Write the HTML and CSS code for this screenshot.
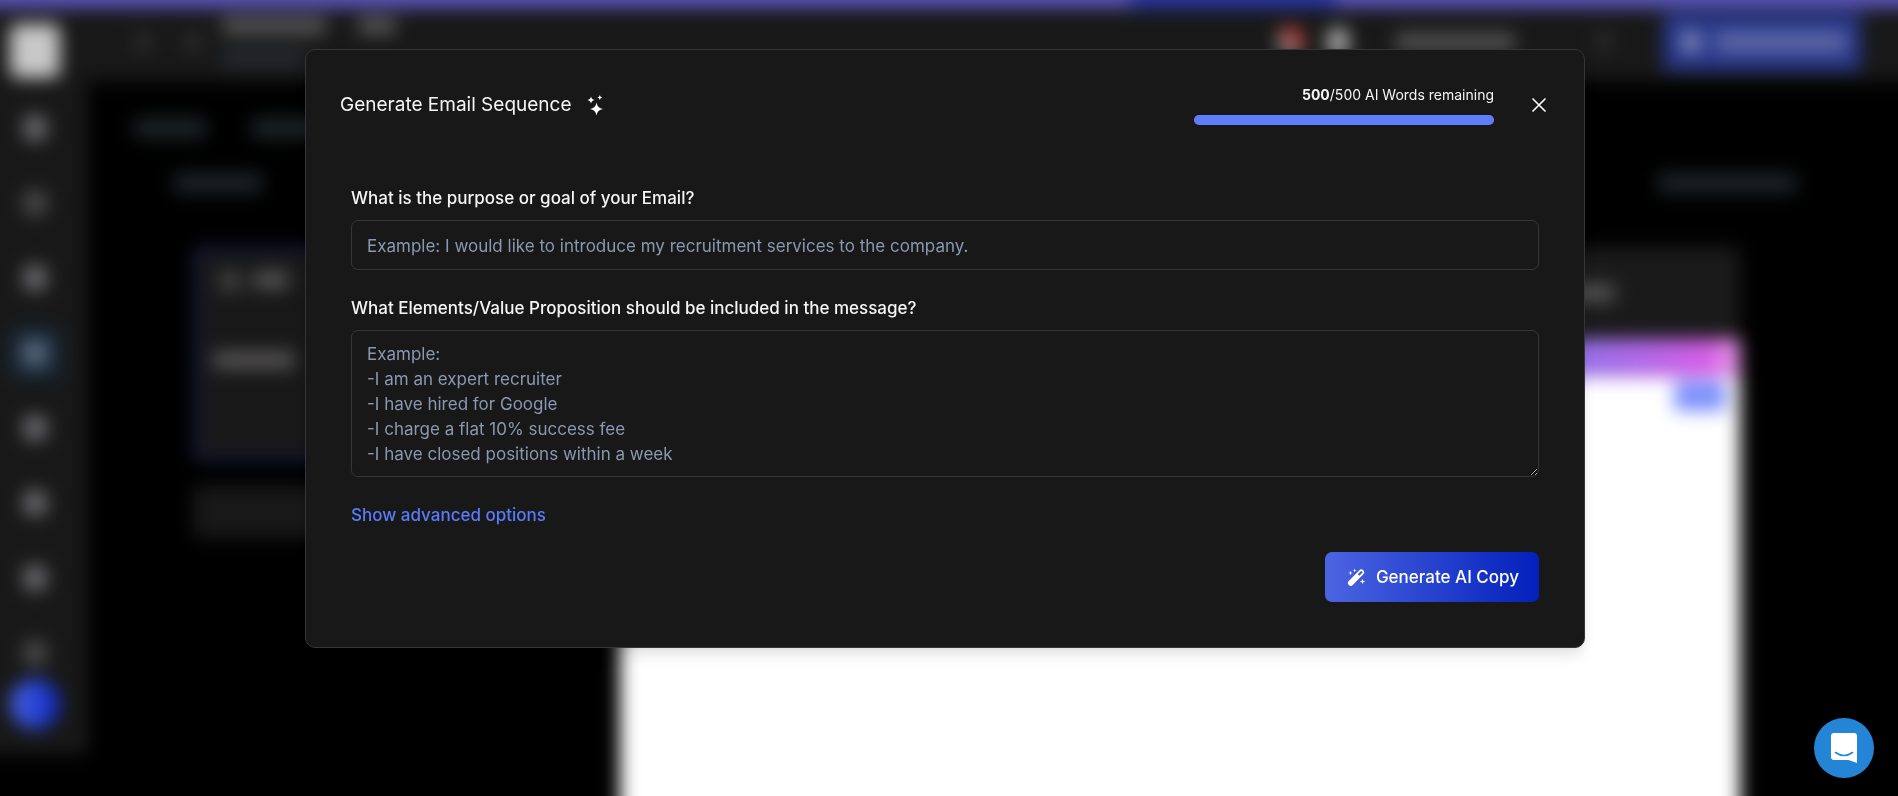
FILE: index.html
```html
<!DOCTYPE html>
<html lang="en">
<head>
<meta charset="utf-8">
<meta name="viewport" content="width=device-width, initial-scale=1">
<title>Generate Email Sequence</title>
<link rel="stylesheet" href="styles.css">
</head>
<body>
<div class="backdrop" aria-hidden="true">
<div class="app">
  <div class="banner"><span class="banner-action"></span></div>
  <div class="shell">
    <nav class="sidebar">
      <span class="logo"></span>
      <span class="nav-item"><i class="nav-icon"></i></span>
      <span class="nav-item"><i class="nav-icon dim"></i></span>
      <span class="nav-item"><i class="nav-icon"></i></span>
      <span class="nav-item active"><i class="nav-icon"></i></span>
      <span class="nav-item"><i class="nav-icon"></i></span>
      <span class="nav-item"><i class="nav-icon"></i></span>
      <span class="nav-item"><i class="nav-icon"></i></span>
      <span class="nav-item"><i class="nav-icon dim"></i></span>
      <span class="avatar"></span>
    </nav>
    <div class="page">
      <header class="topbar">
        <span class="dot"></span>
        <span class="dot"></span>
        <div class="heading">
          <div class="heading-row"><span class="bar title-bar"></span><span class="bar tag-bar"></span></div>
          <span class="bar sub-bar"></span>
        </div>
        <span class="bell"></span>
        <span class="user"></span>
        <span class="bar account-bar"></span>
        <span class="dot caret"></span>
        <div class="cta"><span class="cta-icon"></span><span class="cta-text"></span></div>
      </header>
      <div class="crumbs"><span class="ink crumb"></span><span class="ink crumb"></span></div>
      <div class="tabs"><span class="ink tab"></span><span class="ink tab wide"></span></div>
      <div class="columns">
        <div class="steps">
          <div class="step">
            <div class="step-head"><span class="step-icon"></span><span class="bar step-name"></span></div>
            <span class="bar step-subject"></span>
          </div>
          <div class="add-step"></div>
        </div>
        <div class="editor">
          <div class="editor-head"><span class="bar editor-bar"></span></div>
          <div class="editor-ribbon"></div>
          <div class="editor-body"><span class="chip"></span></div>
        </div>
      </div>
    </div>
  </div>
</div>
</div>

<div class="overlay">
  <section class="modal" role="dialog" aria-modal="true" aria-labelledby="modal-title">
    <header class="modal-head">
      <h1 class="modal-title" id="modal-title">Generate Email Sequence</h1>
      <svg class="sparkle" viewBox="0 0 16 20" aria-hidden="true">
        <path d="M9.500 7.500 Q10.300 13.200 16 14 Q10.300 14.800 9.500 20.500 Q8.700 14.800 3 14 Q8.700 13.200 9.500 7.500Z"/>
        <path d="M4 1.500 Q4.500 4.500 7.500 5 Q4.500 5.500 4 8.500 Q3.500 5.500 0.500 5 Q3.500 4.500 4 1.500Z"/>
        <path d="M12.800 0 Q13.100 2.200 15.300 2.500 Q13.100 2.800 12.800 5 Q12.500 2.800 10.300 2.500 Q12.500 2.200 12.800 0Z"/>
      </svg>
      <div class="quota">
        <span class="quota-text" id="quota-text"><b>500</b>/500 AI Words remaining</span>
        <div class="quota-track" role="progressbar" aria-labelledby="quota-text" aria-valuenow="500" aria-valuemax="500"><div class="quota-fill" style="width:100%"></div></div>
      </div>
      <button class="close" type="button" aria-label="Close">
        <svg class="close-icon" viewBox="0 0 16 16" aria-hidden="true"><path d="M1.500 1.500 14.500 14.500M14.500 1.500 1.500 14.500"/></svg>
      </button>
    </header>
    <form class="modal-body">
      <label class="label" for="goal">What is the purpose or goal of your Email?</label>
      <input class="field" id="goal" type="text" placeholder="Example: I would like to introduce my recruitment services to the company.">
      <label class="label" for="elements">What Elements/Value Proposition should be included in the message?</label>
      <textarea class="field area" id="elements" rows="5" placeholder="Example:
-I am an expert recruiter
-I have hired for Google
-I charge a flat 10% success fee
-I have closed positions within a week"></textarea>
      <button class="advanced" type="button">Show advanced options</button>
      <button class="generate" type="button">
        <svg class="wand" viewBox="0 0 17 17" aria-hidden="true">
          <path fill-rule="evenodd" d="M11.300 1.300a2.700 2.700 0 0 1 4 0a2.700 2.700 0 0 1 0 3.900L4.800 16a2.700 2.700 0 0 1-4 0a2.700 2.700 0 0 1 0-3.900ZM9.800 5.300 11.300 6.800 14.100 4a1 1 0 0 0 0-1.500a1 1 0 0 0-1.500 0Z"/>
          <path d="M2.500 1.800 3.100 3.400 4.700 4 3.100 4.600 2.500 6.200 1.900 4.600 0.300 4 1.900 3.400ZM6.700 -0.300 7.200 1 8.500 1.500 7.200 2 6.700 3.300 6.200 2 4.900 1.500 6.200 1ZM14.500 9.700 15.200 11.800 17.300 12.500 15.200 13.200 14.500 15.300 13.800 13.200 11.700 12.500 13.800 11.800Z"/>
        </svg>
        Generate AI Copy
      </button>
    </form>
  </section>
</div>

<button class="chat" type="button" aria-label="Open chat">
  <svg class="chat-icon" viewBox="0 0 28 32" aria-hidden="true">
    <path fill="#fff" d="M4 1H24a3 3 0 0 1 3 3V31L18.500 28H4a3 3 0 0 1-3-3V4a3 3 0 0 1 3-3Z"/>
    <path fill="none" stroke="#2484d6" stroke-width="1.600" stroke-linecap="round" d="M5.500 20.500Q14 26.500 22.500 20.500"/>
  </svg>
</button>
</body>
</html>
```
FILE: styles.css
```css
* { box-sizing: border-box; }

body {
  margin: 0;
  height: 100vh;
  overflow: hidden;
  background: #000;
  color: #f5f5f6;
  font-family: Inter, "Liberation Sans", sans-serif;
  font-size: 17px;
}

button, input, textarea { font: inherit; }

/* Application behind the dialog; it bleeds 24px past the window so its blur has no soft rim */
.backdrop { position: fixed; inset: 0; overflow: hidden; }
.app {
  display: flex;
  flex-direction: column;
  width: calc(100% + 48px);
  height: calc(100% + 48px);
  margin: -24px;
  filter: blur(9px);
}
.banner { flex: none; height: 32px; background: #5a56ba; display: flex; }
.banner-action { width: 204px; margin-left: 1155px; background: #2836a6; }
.shell { flex: 1; min-height: 0; display: flex; align-items: flex-start; }

.sidebar {
  flex: none;
  width: 112px;
  height: 746px;
  padding: 16px 0 0 34px;
  background: #181818;
}
.sidebar > * { display: flex; align-items: center; justify-content: center; }
.logo { width: 50px; height: 54px; border-radius: 8px; background: #c8c8c8; margin-bottom: 25px; }
.nav-item { width: 50px; height: 50px; margin-bottom: 25px; border-radius: 8px; }
.nav-item.active { background: #182a3c; }
.nav-icon { width: 24px; height: 26px; border-radius: 8px; background: #68686c; }
.nav-icon.dim { background: #48484a; }
.active .nav-icon { background: #5c6a7c; }
.avatar { width: 50px; height: 50px; margin-top: -24px; border-radius: 50%; background: linear-gradient(90deg, #4a63e8, #0a28c0); }

.page { flex: 1; min-width: 0; height: 100%; display: flex; flex-direction: column; }
.topbar { flex: none; display: flex; align-items: center; height: 73px; padding: 0 61px 6px 0; background: #181818; }
.bar { display: block; height: 18px; border-radius: 4px; background: #545253; }
.dot { width: 14px; height: 18px; margin-left: 48px; background: #303030; }
.dot + .dot { margin-left: 36px; }
.heading { margin: 0 auto 0 22px; }
.heading-row { display: flex; gap: 32px; }
.title-bar { width: 104px; }
.tag-bar { width: 38px; }
.sub-bar { width: 82px; margin-top: 14px; background: #25292e; }
.bell { width: 26px; height: 28px; border-radius: 8px; background: linear-gradient(45deg, #777 40%, #c04040 60%); }
.user { width: 22px; height: 28px; margin-left: 24px; border-radius: 8px; background: #a8a8a8; }
.account-bar { width: 120px; margin-left: 46px; }
.caret { margin-left: 82px; }
.cta { display: flex; align-items: center; gap: 14px; width: 198px; height: 58px; margin-left: 52px; padding-left: 18px; border-radius: 6px; background: #263688; }
.cta-icon { width: 20px; height: 22px; background: #7c82b4; }
.cta-text { width: 132px; height: 22px; background: #5c65a4; }

.ink { display: block; height: 20px; background: #1d2428; }
.crumbs { display: flex; gap: 46px; padding: 37px 0 0 46px; }
.crumb { width: 72px; }
.tabs { display: flex; justify-content: space-between; padding: 35px 126px 54px 86px; }
.tab { width: 88px; }
.tab.wide { width: 138px; }

.columns { flex: 1; min-height: 0; display: flex; gap: 80px; padding: 0 182px 0 105px; }
.steps { flex: 1; }
.step { height: 214px; padding: 20px 16px; border: 4px solid #171f58; border-radius: 8px; background: #181818; }
.step-head { display: flex; gap: 12px; margin-bottom: 60px; padding-left: 6px; }
.step-icon { width: 22px; height: 20px; background: #424242; }
.step-name { width: 36px; }
.step-subject { width: 82px; }
.add-step { height: 52px; margin-top: 25px; background: #181818; }
.editor { flex: none; width: 1120px; display: flex; flex-direction: column; }
.editor-head { flex: none; display: flex; align-items: center; justify-content: flex-end; height: 92px; padding-right: 125px; background: #1a1a1a; }
.editor-bar { width: 60px; }
.editor-ribbon { flex: none; height: 38px; background: linear-gradient(90deg, #6a7cf0 50%, #9272e6 85%, #b468e8 92%, #d45ce4 97%, #eca0ea 100%); }
.editor-body { flex: 1; display: flex; justify-content: flex-end; align-items: flex-start; padding: 4px 14px; background: #fff; }
.chip { width: 52px; height: 30px; border-radius: 6px; background: #7b90fb; }

/* Dialog */
.overlay { position: fixed; inset: 0; padding: 49px 24px 16px 16px; }
.modal {
  max-width: 1280px;
  margin: 0 auto;
  border: 1px solid #35353b;
  border-radius: 10px;
  background: #181818;
  box-shadow: 0 10px 15px -3px rgba(0, 0, 0, .1), 0 4px 6px -2px rgba(0, 0, 0, .05);
}
.modal-head { display: flex; align-items: center; height: 110px; padding: 0 33px 0 34px; }
.modal-title { margin: 0; font-size: 19px; font-weight: 400; line-height: 28px; }
.sparkle { width: 16px; height: 20px; margin-left: 16px; fill: #fff; overflow: visible; }
.quota { width: 300px; margin-left: auto; text-align: right; }
.quota-text { display: block; font-size: 14px; line-height: 20px; }
.quota-track { height: 10px; margin-top: 10px; border-radius: 5px; background: #2a2a2e; }
.quota-fill { height: 100%; border-radius: 5px; background: #5f7dfb; }
.close { display: flex; align-items: center; justify-content: center; width: 24px; height: 24px; margin-left: 33px; padding: 0; border: 0; background: none; }
.close-icon { width: 16px; height: 16px; fill: none; stroke: #fff; stroke-width: 1.600; }

.modal-body { display: flex; flex-direction: column; align-items: flex-start; padding: 26px 45px 45px; }
.label { margin-bottom: 9px; font-weight: 500; line-height: 25px; }
.field {
  display: block;
  width: 100%;
  height: 50px;
  margin: 0 0 26px;
  padding: 11px 15px 9px;
  border: 1px solid #34343a;
  border-radius: 7px;
  outline: 0;
  background: transparent;
  color: #f5f5f6;
  color-scheme: dark;
  line-height: 25px;
}
.area { height: 147px; resize: vertical; overflow: auto; }
.field::placeholder { color: #8a98b1; opacity: 1; }
.advanced { padding: 0; border: 0; background: none; color: #5b7bfa; font-weight: 500; line-height: 25px; }
.generate {
  display: flex;
  align-items: center;
  gap: 11px;
  align-self: flex-end;
  height: 50px;
  margin-top: 24px;
  padding: 0 20px 0 23px;
  border: 0;
  border-radius: 7px;
  background: linear-gradient(90deg, #4b65e2, #0320bb);
  color: #fff;
  font-weight: 500;
}
.wand { width: 17px; height: 17px; fill: #fff; overflow: visible; }

.chat {
  position: fixed;
  right: 24px;
  bottom: 18px;
  display: flex;
  align-items: center;
  justify-content: center;
  width: 60px;
  height: 60px;
  padding: 0;
  border: 0;
  border-radius: 50%;
  background: #2484d6;
}
.chat-icon { width: 28px; height: 32px; }
```
